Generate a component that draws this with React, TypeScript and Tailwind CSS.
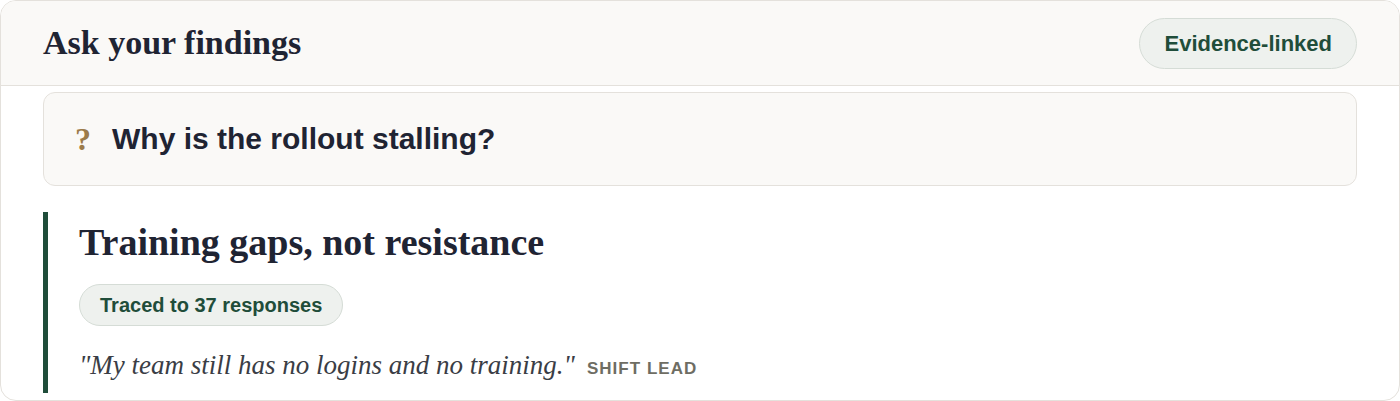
export default function App() {
  return (
    <div className="h-[401px] w-[1400px] bg-white">
      <div className="flex h-[401px] flex-col overflow-hidden rounded-[16px] border border-[#e4e1dc] bg-white">
        <div className="flex h-[85px] shrink-0 items-center justify-between border-b border-[#e4e1dc] bg-[#faf9f7] pl-[42px] pr-[42px]">
          <h1 className="font-['Liberation_Serif',serif] text-[34px] font-bold leading-[1.2] text-[#1f2433]">
            Ask your findings
          </h1>
          <span className="flex h-[51px] items-center rounded-full border border-[#d5dcd6] bg-[#eef1ee] px-[24px] font-['Liberation_Sans',sans-serif] text-[22px] font-bold text-[#1f4d3a]">
            Evidence-linked
          </span>
        </div>

        <div className="px-[42px] pt-[6px]">
          <div className="flex h-[94px] items-center gap-[21px] rounded-[12px] border border-[#e4e1dc] bg-[#faf9f7] pl-[31px]">
            <span className="font-['Liberation_Serif',serif] text-[32px] font-bold leading-none text-[#9c7b4a]">
              ?
            </span>
            <span className="font-['Liberation_Sans',sans-serif] text-[30px] font-bold leading-none text-[#1f2433]">
              Why is the rollout stalling?
            </span>
          </div>

          <div className="mt-[26px] border-l-[5px] border-[#1f4d3a] pb-[10px] pl-[31px] pt-[8px]">
            <h2 className="font-['Liberation_Serif',serif] text-[38px] font-bold leading-[1.2] text-[#1f2433]">
              Training gaps, not resistance
            </h2>
            <span className="mt-[18px] inline-flex h-[42px] items-center rounded-full border border-[#d5dcd6] bg-[#eef1ee] px-[20px] font-['Liberation_Sans',sans-serif] text-[20px] font-bold text-[#1f4d3a]">
              Traced to 37 responses
            </span>
            <p className="mt-[22px] flex items-baseline gap-[12px] leading-[1.3]">
              <span className="font-['Liberation_Serif',serif] text-[27px] italic text-[#3a3d45]">
                "My team still has no logins and no training."
              </span>
              <span className="font-['Liberation_Sans',sans-serif] text-[17px] font-bold uppercase tracking-[0.06em] text-[#6e6d63]">
                Shift lead
              </span>
            </p>
          </div>
        </div>
      </div>
    </div>
  );
}
